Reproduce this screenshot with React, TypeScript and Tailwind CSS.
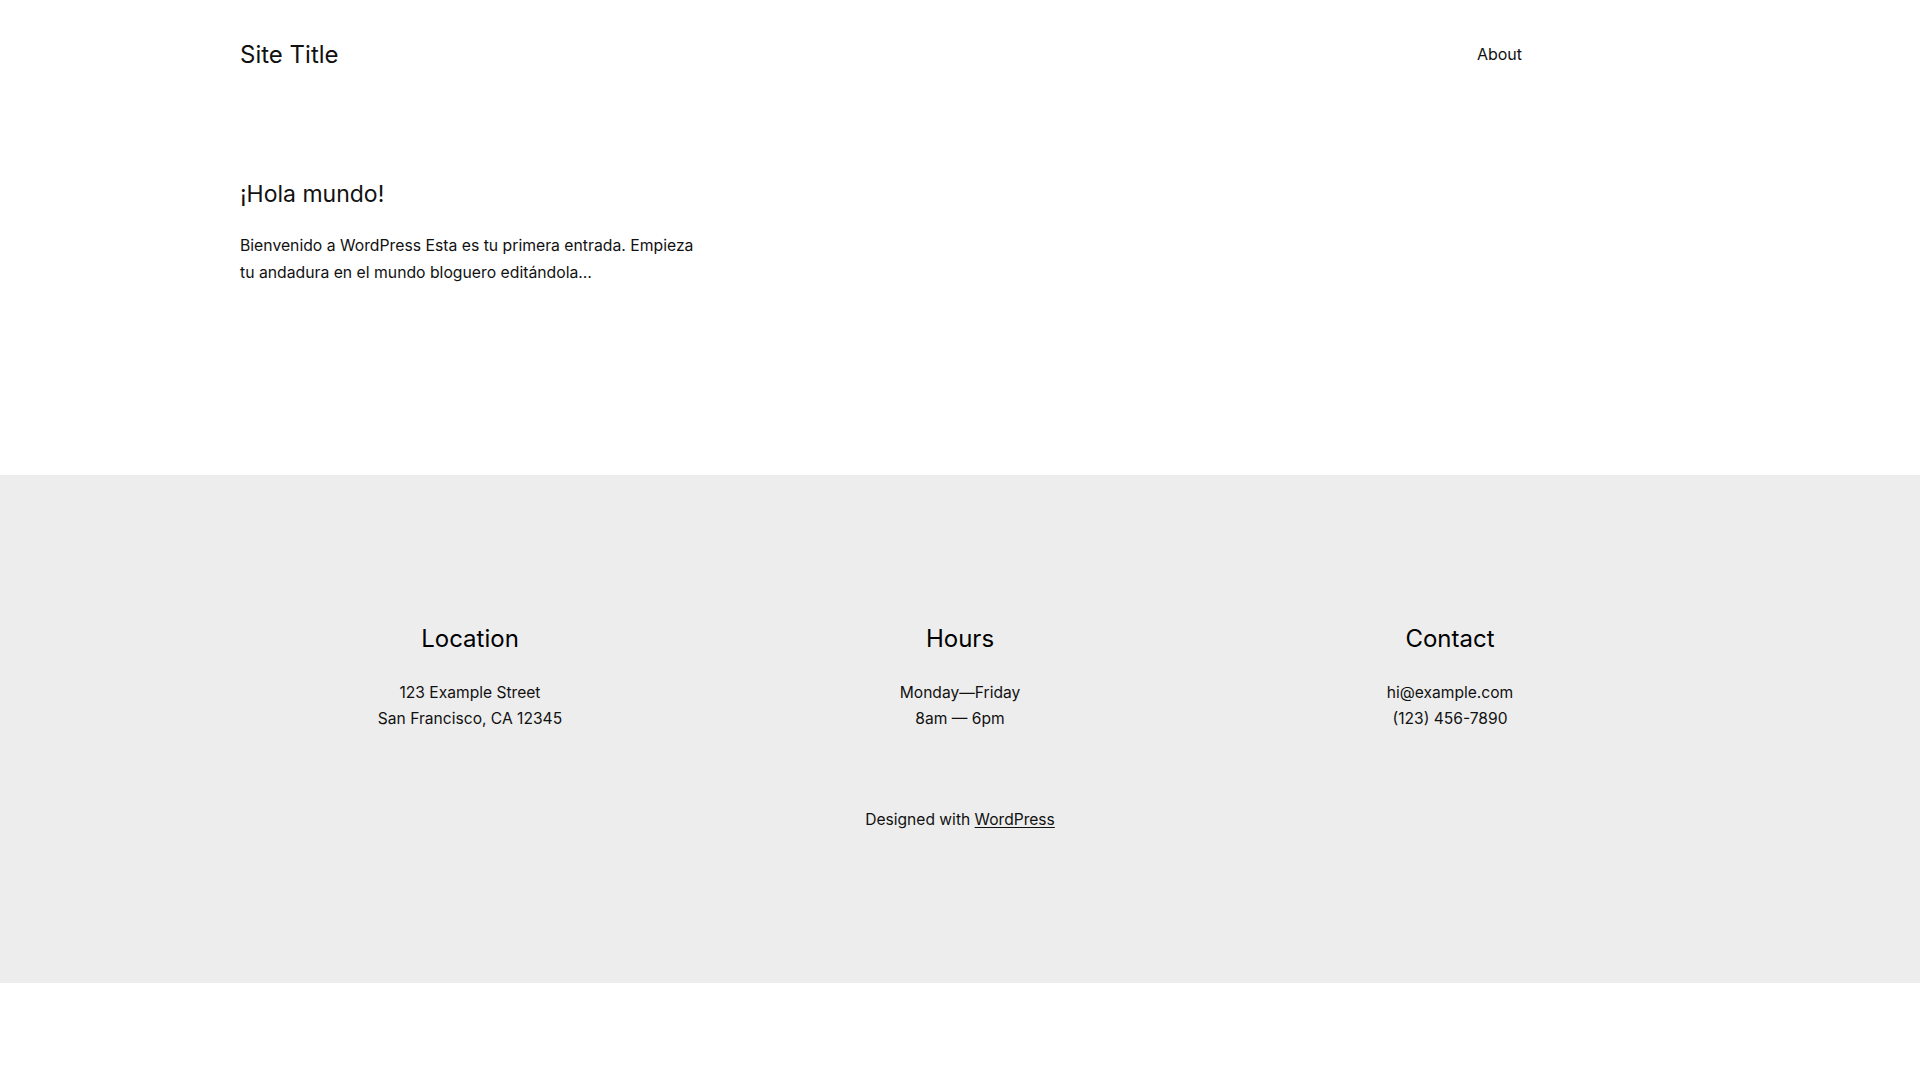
import React from "react";

function Header() {
  return (
    <header className="h-[110px] flex items-center pl-[240px]">
      <div className="w-[1282px] flex justify-between items-center">
        <a href="#" className="text-[24px] leading-[1.2] text-[#111]">
          Site Title
        </a>
        <nav className="mb-[1px]">
          <a href="#" className="text-[16px] text-[#111]">
            About
          </a>
        </nav>
      </div>
    </header>
  );
}

function Post() {
  return (
    <main className="pl-[240px] pt-[71px] h-[365px]">
      <h2 className="text-[23px] leading-[1.2] text-[#111]">
        <a href="#">¡Hola mundo!</a>
      </h2>
      <p className="mt-[23px] w-[465px] text-[15.75px] leading-[27px] text-[#111]">
        Bienvenido a WordPress Esta es tu primera entrada. Empieza tu andadura en el mundo bloguero editándola…
      </p>
    </main>
  );
}

function FooterColumn({ title, lines }: { title: string; lines: string[] }) {
  return (
    <div className="w-[490px] flex flex-col items-center text-center">
      <h3 className="text-[24px] leading-[32px] text-black">{title}</h3>
      <div className="mt-[25px] text-[15.6px] leading-[26px] text-[#111]">
        {lines.map((line) => (
          <p key={line}>{line}</p>
        ))}
      </div>
    </div>
  );
}

function Footer() {
  return (
    <footer className="bg-[#ededed] h-[508px] pt-[148px]">
      <div className="flex justify-center">
        <FooterColumn title="Location" lines={["123 Example Street", "San Francisco, CA 12345"]} />
        <FooterColumn title="Hours" lines={["Monday—Friday", "8am — 6pm"]} />
        <FooterColumn title="Contact" lines={["hi@example.com", "(123) 456-7890"]} />
      </div>
      <p className="mt-[75px] text-center text-[15.6px] leading-[26px] text-[#111]">
        Designed with{" "}
        <a href="#" className="underline underline-offset-2">
          WordPress
        </a>
      </p>
    </footer>
  );
}

export default function App() {
  return (
    <div className="min-h-screen bg-white font-['Inter',sans-serif]">
      <Header />
      <Post />
      <Footer />
    </div>
  );
}
